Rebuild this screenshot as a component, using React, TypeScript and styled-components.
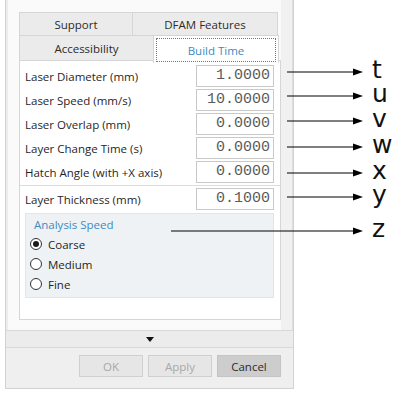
import React from 'react';
import styled, { createGlobalStyle } from 'styled-components';

const GlobalStyle = createGlobalStyle`
  html, body {
    margin: 0;
    padding: 0;
    background: #ffffff;
  }
  body {
    font-family: 'Open Sans', 'Noto Sans', Arial, sans-serif;
  }
`;

const Page = styled.div`
  position: relative;
  width: 403px;
  height: 393px;
  overflow: hidden;
  background: #ffffff;
`;

const Dialog = styled.div`
  display: flex;
  flex-direction: column;
  box-sizing: border-box;
  width: 289px;
  height: 389px;
  margin-left: 5px;
  border: 1px solid #d2d2d2;
  border-top: none;
  background: #efefef;
`;

const Body = styled.div`
  display: flex;
  height: 330px;
  padding-left: 2px;
  background: #ececec;
`;

const ScrollArea = styled.div`
  flex: 0 0 273px;
  box-sizing: border-box;
  padding: 12px 0 8px 11px;
  background: #fafafa;
  display: flex;
  flex-direction: column;
`;

const ScrollTrack = styled.div`
  flex: 1;
  background: #f1f1f1;
  border-right: 1px solid #dedede;
`;

const TabStrip = styled.div`
  display: flex;
  flex-direction: column;
  align-items: flex-start;
`;

const TabRow = styled.div<{ $lower?: boolean }>`
  display: flex;
  align-items: flex-start;
  padding-right: 2px;
  margin-top: ${({ $lower }) => ($lower ? '-1px' : '0')};
`;

const Tab = styled.div<{ $w: number; $active?: boolean; $h: number }>`
  box-sizing: border-box;
  width: ${({ $w }) => $w}px;
  height: ${({ $h }) => $h}px;
  display: flex;
  align-items: center;
  justify-content: center;
  font-size: 11.5px;
  color: ${({ $active }) => ($active ? '#3c8cc4' : '#2b2b2b')};
  background: ${({ $active }) => ($active ? '#ffffff' : '#ebebeb')};
  border: 1px solid #d6d6d6;
  border-bottom: ${({ $active }) => ($active ? 'none' : '1px solid #d6d6d6')};
  margin-left: -1px;
  margin-bottom: ${({ $active }) => ($active ? '-1px' : '0')};
  position: relative;
  z-index: ${({ $active }) => ($active ? 1 : 0)};
  &:first-child {
    margin-left: 0;
  }
`;

const FocusRing = styled.span`
  box-sizing: border-box;
  width: calc(100% - 4px);
  height: calc(100% - 3px);
  margin-top: 1px;
  border: 1px dotted #777;
  display: flex;
  align-items: center;
  justify-content: center;
`;

const Content = styled.div`
  box-sizing: border-box;
  height: 260px;
  margin-top: -2px;
  background: #ffffff;
  border: 1px solid #d6d6d6;
  padding: 3px 6px 0 5px;
  display: flex;
  flex-direction: column;
`;

const Row = styled.div`
  display: flex;
  align-items: center;
  justify-content: space-between;
  height: 24px;
`;

const Label = styled.span`
  font-size: 11.5px;
  color: #1f1f1f;
`;

const NumberBox = styled.div`
  box-sizing: border-box;
  width: 78px;
  height: 22px;
  border: 1px solid #c9c9c9;
  background: #ffffff;
  font-family: 'Liberation Mono', 'Courier New', monospace;
  font-size: 15px;
  color: #5a5a5a;
  text-align: right;
  line-height: 20px;
  padding-right: 3px;
`;

const Divider = styled.div`
  height: 1px;
  background: #dcdcdc;
  margin: 1px -6px 1px -5px;
`;

const GroupBox = styled.div`
  box-sizing: border-box;
  margin-top: 2px;
  height: 85px;
  background: #eef2f4;
  border: 1px solid #e2e6e9;
  padding: 2px 0 0 4px;
  display: flex;
  flex-direction: column;
`;

const GroupTitle = styled.div`
  font-size: 11.5px;
  color: #3c8cc4;
  height: 18px;
  line-height: 18px;
  padding-left: 4px;
`;

const RadioRow = styled.label`
  display: flex;
  align-items: center;
  gap: 6px;
  height: 20px;
  font-size: 11.5px;
  color: #1f1f1f;
`;

const RadioDot = styled.span<{ $on?: boolean }>`
  box-sizing: border-box;
  width: 12px;
  height: 12px;
  border-radius: 50%;
  border: 1px solid #333333;
  background: #ffffff;
  display: flex;
  align-items: center;
  justify-content: center;
  &::after {
    content: '';
    width: 6px;
    height: 6px;
    border-radius: 50%;
    background: ${({ $on }) => ($on ? '#1a1a1a' : 'transparent')};
  }
`;

const Expander = styled.div`
  height: 16px;
  border-top: 1px solid #d8d8d8;
  border-bottom: 1px solid #d8d8d8;
  display: flex;
  align-items: center;
  justify-content: center;
  background: #ececec;
`;

const ButtonBar = styled.div`
  flex: 1;
  display: flex;
  justify-content: flex-end;
  gap: 5px;
  padding: 7px 12px 0 0;
  background: #efefef;
`;

const Button = styled.div<{ $enabled?: boolean }>`
  box-sizing: border-box;
  width: 64px;
  height: 22px;
  display: flex;
  align-items: center;
  justify-content: center;
  font-size: 11.5px;
  color: ${({ $enabled }) => ($enabled ? '#2b2b2b' : '#a8a8a8')};
  background: ${({ $enabled }) => ($enabled ? '#cdcdcd' : '#e6e6e6')};
  border: 1px solid ${({ $enabled }) => ($enabled ? '#c4c4c4' : '#d0d0d0')};
`;

const Callout = styled.div`
  position: absolute;
  display: flex;
  align-items: center;
  height: 22px;
`;

const CalloutLetter = styled.span`
  font-family: 'DejaVu Sans', sans-serif;
  font-size: 25px;
  line-height: 22px;
  color: #111111;
  margin-left: 9px;
  margin-top: -5px;
`;

const fields = [
  { label: 'Laser Diameter (mm)', value: '1.0000' },
  { label: 'Laser Speed (mm/s)', value: '10.0000' },
  { label: 'Laser Overlap (mm)', value: '0.0000' },
  { label: 'Layer Change Time (s)', value: '0.0000' },
  { label: 'Hatch Angle (with +X axis)', value: '0.0000' },
];

const callouts = [
  { letter: 't', y: 72, x: 287 },
  { letter: 'u', y: 96, x: 287 },
  { letter: 'v', y: 121, x: 287 },
  { letter: 'w', y: 147, x: 287 },
  { letter: 'x', y: 173, x: 287 },
  { letter: 'y', y: 197, x: 287 },
  { letter: 'z', y: 231, x: 171 },
];

function Arrow({ length }: { length: number }) {
  return (
    <svg width={length} height={10} viewBox={`0 0 ${length} 10`}>
      <line x1={0} y1={5} x2={length - 8} y2={5} stroke="#000" strokeWidth={1.2} />
      <polygon points={`${length - 10},1.5 ${length},5 ${length - 10},8.5`} fill="#000" />
    </svg>
  );
}

export default function App() {
  return (
    <Page>
      <GlobalStyle />
      <Dialog>
        <Body>
          <ScrollArea>
            <TabStrip>
              <TabRow>
                <Tab $w={114} $h={24}>Support</Tab>
                <Tab $w={146} $h={24}>DFAM Features</Tab>
              </TabRow>
              <TabRow $lower>
                <Tab $w={135} $h={26}>Accessibility</Tab>
                <Tab $w={126} $h={28} $active>
                  <FocusRing>Build Time</FocusRing>
                </Tab>
              </TabRow>
            </TabStrip>
            <Content>
              {fields.map((f) => (
                <Row key={f.label}>
                  <Label>{f.label}</Label>
                  <NumberBox>{f.value}</NumberBox>
                </Row>
              ))}
              <Divider />
              <Row>
                <Label>Layer Thickness (mm)</Label>
                <NumberBox>0.1000</NumberBox>
              </Row>
              <GroupBox>
                <GroupTitle>Analysis Speed</GroupTitle>
                <RadioRow>
                  <RadioDot $on />
                  Coarse
                </RadioRow>
                <RadioRow>
                  <RadioDot />
                  Medium
                </RadioRow>
                <RadioRow>
                  <RadioDot />
                  Fine
                </RadioRow>
              </GroupBox>
            </Content>
          </ScrollArea>
          <ScrollTrack />
        </Body>
        <Expander>
          <svg width={8} height={5} viewBox="0 0 8 5">
            <polygon points="0,0 8,0 4,5" fill="#111" />
          </svg>
        </Expander>
        <ButtonBar>
          <Button>OK</Button>
          <Button>Apply</Button>
          <Button $enabled>Cancel</Button>
        </ButtonBar>
      </Dialog>
      {callouts.map((c) => (
        <Callout key={c.letter} style={{ top: c.y - 11, left: c.x }}>
          <Arrow length={363 - c.x} />
          <CalloutLetter>{c.letter}</CalloutLetter>
        </Callout>
      ))}
    </Page>
  );
}
